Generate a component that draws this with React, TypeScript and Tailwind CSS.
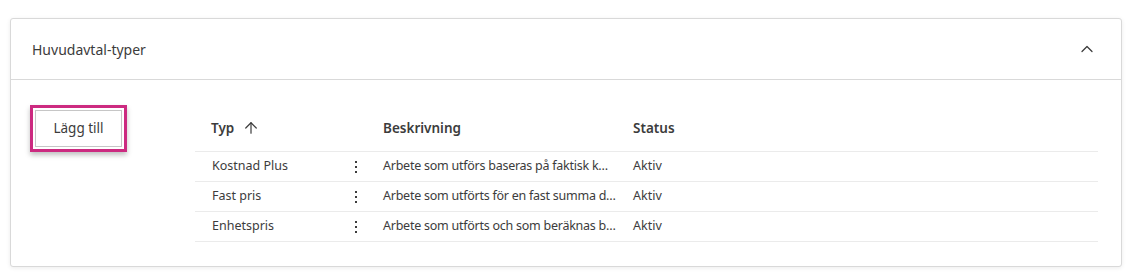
import { ChevronUp, ArrowUp } from "lucide-react";

const rows = [
  { typ: "Kostnad Plus", desc: "Arbete som utförs baseras på faktisk k…", status: "Aktiv" },
  { typ: "Fast pris", desc: "Arbete som utförts för en fast summa d…", status: "Aktiv" },
  { typ: "Enhetspris", desc: "Arbete som utförts och som beräknas b…", status: "Aktiv" },
];

function Kebab() {
  return (
    <svg width="4" height="14" viewBox="0 0 4 14" className="text-[#3c3c3c]">
      <rect x="1" y="1" width="2" height="2" fill="currentColor" />
      <rect x="1" y="6" width="2" height="2" fill="currentColor" />
      <rect x="1" y="11" width="2" height="2" fill="currentColor" />
    </svg>
  );
}

export default function App() {
  return (
    <div className="h-[275px] w-[1138px] bg-white pt-[18px] pl-[10px] font-['Noto_Sans',sans-serif] text-[#3c3c3c]">
      <div className="w-[1112px] rounded-[3px] border border-[#d9d9d9] bg-white shadow-[0_1px_4px_rgba(0,0,0,0.08)]">
        <div className="flex h-[61px] items-center justify-between border-b border-[#d9d9d9] pl-[21px] pr-[24px]">
          <span className="text-[14px] text-[#3c3c3c]">Huvudavtal-typer</span>
          <ChevronUp size={20} strokeWidth={1.5} className="text-[#3c3c3c]" />
        </div>
        <div className="flex pt-[25px] pb-[24px] pl-[19px]">
          <div className="w-[165px] shrink-0">
            <div className="inline-block border-[3px] border-[#cc2a80] p-[2px] shadow-[0_3px_5px_rgba(0,0,0,0.25)]">
              <button className="h-[37px] w-[87px] border border-[#c6c6c6] bg-white text-[13.5px] text-[#3c3c3c]">
                Lägg till
              </button>
            </div>
          </div>
          <div className="w-[903px] shrink-0">
            <div className="flex h-[47px] items-center border-b border-[#ebebeb] text-[13.5px] font-semibold text-[#3c3c3c]">
              <div className="flex w-[145px] shrink-0 items-center gap-[8px] pl-[16px]">
                Typ
                <ArrowUp size={18} strokeWidth={1.6} />
              </div>
              <div className="w-[43px] shrink-0" />
              <div className="w-[250px] shrink-0">Beskrivning</div>
              <div className="flex-1">Status</div>
            </div>
            {rows.map((r) => (
              <div key={r.typ} className="flex h-[30px] items-center border-b border-[#ebebeb] text-[12.5px] text-[#3c3c3c]">
                <div className="w-[145px] shrink-0 pl-[17px]">{r.typ}</div>
                <div className="flex w-[32px] shrink-0 justify-center"><Kebab /></div>
                <div className="w-[11px] shrink-0" />
                <div className="w-[250px] shrink-0 whitespace-nowrap tracking-[-0.25px]">{r.desc}</div>
                <div className="flex-1">{r.status}</div>
              </div>
            ))}
          </div>
        </div>
      </div>
    </div>
  );
}
